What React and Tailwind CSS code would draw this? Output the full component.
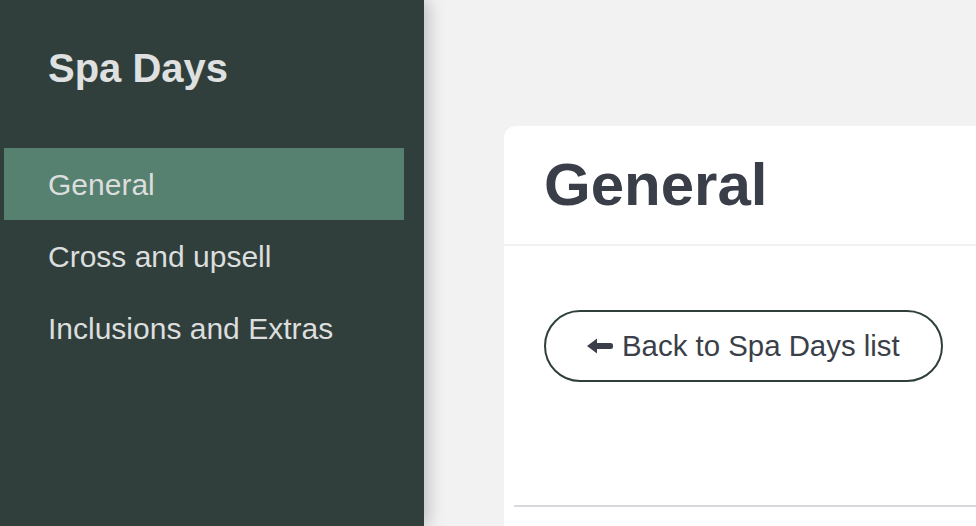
import React from 'react';

const navItems = ['General', 'Cross and upsell', 'Inclusions and Extras'];

function ArrowLeftIcon() {
  return (
    <svg width="26" height="16" viewBox="0 0 26 16" className="shrink-0">
      <path d="M0 8 L10 0.5 L10 15.5 Z" fill="#3a3f49" />
      <rect x="8" y="5" width="18" height="6" rx="2.5" fill="#3a3f49" />
    </svg>
  );
}

export default function App() {
  return (
    <div className="h-screen w-full flex bg-[#f2f2f2] overflow-hidden" style={{ fontFamily: '"Liberation Sans", Arial, sans-serif' }}>
      {/* Sidebar */}
      <aside className="w-[424px] shrink-0 bg-[#303f3c] flex flex-col shadow-[4px_0_16px_rgba(0,0,0,0.22)] z-10">
        <h2 className="pt-12 pl-12 text-[40px] leading-[40px] font-bold text-[#dfe0e0]">Spa Days</h2>
        <nav className="mt-[60px] flex flex-col">
          {navItems.map((item, i) => (
            <div
              key={item}
              className={`ml-1 w-[400px] h-[72px] flex items-center pl-11 text-[30px] text-[#dcdedd] ${i === 0 ? 'bg-[#56806f]' : ''}`}
            >
              {item}
            </div>
          ))}
        </nav>
      </aside>

      {/* Main */}
      <main className="flex-1 pl-[80px] pt-[126px]">
        <div className="bg-white rounded-tl-[12px] h-full">
          <div className="h-[120px] flex items-center pl-10 border-b-2 border-[#f2f2f2]">
            <h1 className="text-[60px] font-bold text-[#393e48] leading-none">General</h1>
          </div>
          <div className="pt-[64px] pl-10">
            <button className="h-[72px] pl-[41px] pr-[41px] rounded-full border-2 border-[#2f403c] flex items-center gap-[9px] text-[29.4px] text-[#3a3f49] bg-white">
              <ArrowLeftIcon />
              <span>Back to Spa Days list</span>
            </button>
          </div>
          <div className="mt-[123px] ml-[10px] border-t-2 border-[#d9d9dd]" />
        </div>
      </main>
    </div>
  );
}
